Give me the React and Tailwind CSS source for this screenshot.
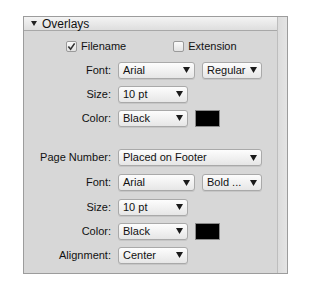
import React from 'react';

const Arrow = () => (
  <svg width="7" height="6" viewBox="0 0 7 6" className="shrink-0">
    <path d="M0 0 L7 0 L3.5 6 Z" fill="#1a1a1a" />
  </svg>
);

function Select({ value, width }) {
  return (
    <div
      className={`${width} h-[17px] flex items-center justify-between pl-[4px] pr-[4px] rounded-[3px] border border-[#a9a9a9] bg-gradient-to-b from-[#fdfdfd] to-[#e6e6e6] shadow-[0_1px_0_rgba(0,0,0,0.08)] text-[11px] text-[#111] leading-none`}
    >
      <span className="whitespace-nowrap">{value}</span>
      <Arrow />
    </div>
  );
}

function Row({ label, height = 'h-[24px]', children }) {
  return (
    <div className={`${height} flex items-center`}>
      <div className="w-[94px] text-right pr-[7px] text-[11px] text-[#111]">{label}</div>
      <div className="flex items-center gap-[7px]">{children}</div>
    </div>
  );
}

function Checkbox({ checked, label }) {
  return (
    <div className="flex items-center gap-[4px]">
      <div className="w-[11px] h-[11px] border border-[#9a9a9a] bg-gradient-to-b from-[#fafafa] to-[#e2e2e2] rounded-[2px] flex items-center justify-center">
        {checked && (
          <svg width="10" height="9" viewBox="0 0 10 9">
            <path d="M1.5 4.5 L4 7.5 L8.5 1" stroke="#333" strokeWidth="1.8" fill="none" />
          </svg>
        )}
      </div>
      <span className="text-[11px] text-[#111]">{label}</span>
    </div>
  );
}

const Swatch = () => (
  <div className="w-[25px] h-[17px] bg-black border border-[#8a8a8a]" />
);

export default function App() {
  return (
    <div className="w-[317px] h-[300px] bg-white pt-[16px] pl-[23px]" style={{ fontFamily: '"Liberation Sans", Arial, sans-serif' }}>
      <div className="w-[265px] h-[258px] border border-[#9c9c9c] bg-[#d7d7d7] flex">
        <div className="flex-1">
          <div className="h-[14px] flex items-center gap-[5px] pl-[7px] border-b border-[#a8a8a8] bg-gradient-to-b from-[#f4f4f4] to-[#dedede] text-[12px] text-[#111]">
            <svg width="6" height="5" viewBox="0 0 6 5">
              <path d="M0 0 L6 0 L3 5 Z" fill="#222" />
            </svg>
            <span>Overlays</span>
          </div>
          <div className="pt-[3px]">
            <div className="h-[24px] flex items-center">
              <div className="w-[42px]" />
              <Checkbox checked label="Filename" />
              <div className="w-[47px]" />
              <Checkbox label="Extension" />
            </div>
            <Row label="Font:">
              <Select value="Arial" width="w-[77px]" />
              <Select value="Regular" width="w-[60px]" />
            </Row>
            <Row label="Size:">
              <Select value="10 pt" width="w-[70px]" />
            </Row>
            <Row label="Color:">
              <Select value="Black" width="w-[70px]" />
              <Swatch />
            </Row>
            <div className="h-[15px]" />
            <Row label="Page Number:" height="h-[25px]">
              <Select value="Placed on Footer" width="w-[144px]" />
            </Row>
            <Row label="Font:" height="h-[25px]">
              <Select value="Arial" width="w-[77px]" />
              <Select value="Bold ..." width="w-[60px]" />
            </Row>
            <Row label="Size:">
              <Select value="10 pt" width="w-[70px]" />
            </Row>
            <Row label="Color:">
              <Select value="Black" width="w-[70px]" />
              <Swatch />
            </Row>
            <Row label="Alignment:">
              <Select value="Center" width="w-[70px]" />
            </Row>
          </div>
        </div>
        <div className="w-[10px] border-l border-[#bdbdbd] bg-gradient-to-r from-[#dcdcdc] to-[#e4e4e4]" />
      </div>
    </div>
  );
}
